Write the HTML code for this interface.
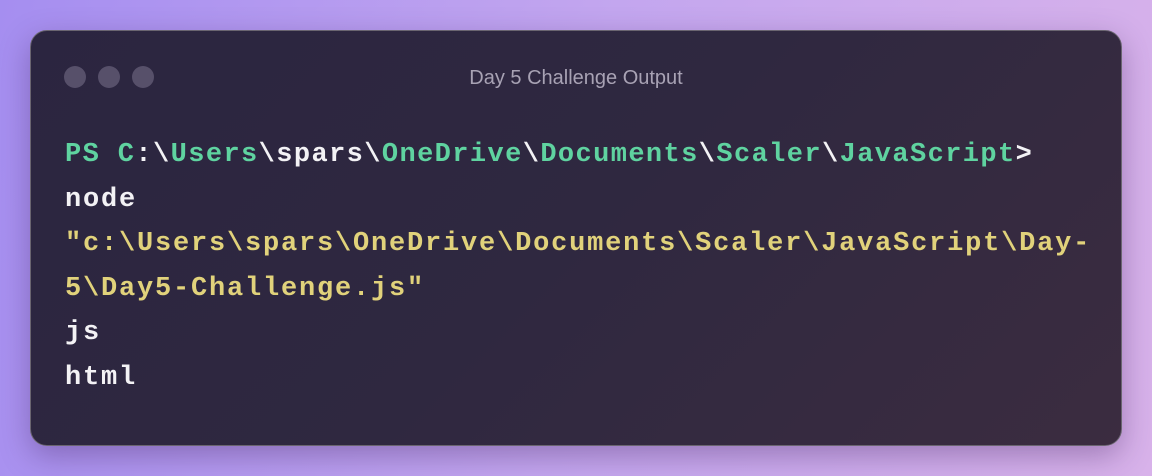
<!DOCTYPE html>
<html><head><style>
html,body{margin:0;padding:0;width:1152px;height:476px;overflow:hidden}
body{background:linear-gradient(100deg,#a58ef0 0%,#c3a6ef 50%,#d8b2ea 100%);position:relative}
.win{position:absolute;left:30px;top:30px;width:1090px;height:414px;border:1.5px solid #6a6570;border-radius:17px;background:linear-gradient(135deg,#2b2540 0%,#2f2840 50%,#3b2c40 100%);box-shadow:0 10px 30px rgba(60,30,90,.35)}
.dot{position:absolute;top:35px;width:22px;height:22px;border-radius:50%;background:#57506a}
.title{position:absolute;left:0;right:0;top:36px;text-align:center;font:20px "Liberation Sans",sans-serif;color:#a8a2b4}
.code{position:absolute;left:34px;top:102px;font:bold 27px/44.5px "Liberation Mono",monospace;letter-spacing:1.8px;color:#f3f2f5;white-space:pre}
.l1{letter-spacing:1.4px}
.g{color:#5fd3a0}.y{color:#e1d27b}
</style></head><body>
<div class="win">
<div class="dot" style="left:33px"></div><div class="dot" style="left:67px"></div><div class="dot" style="left:101px"></div>
<div class="title">Day 5 Challenge Output</div>
<div class="code"><span class="l1"><span class="g">PS C</span>:\<span class="g">Users</span>\spars\<span class="g">OneDrive</span>\<span class="g">Documents</span>\<span class="g">Scaler</span>\<span class="g">JavaScript</span>&gt;</span>
node
<span class="y">"c:\Users\spars\OneDrive\Documents\Scaler\JavaScript\Day-
5\Day5-Challenge.js"</span>
js
html</div>
</div>
</body></html>
